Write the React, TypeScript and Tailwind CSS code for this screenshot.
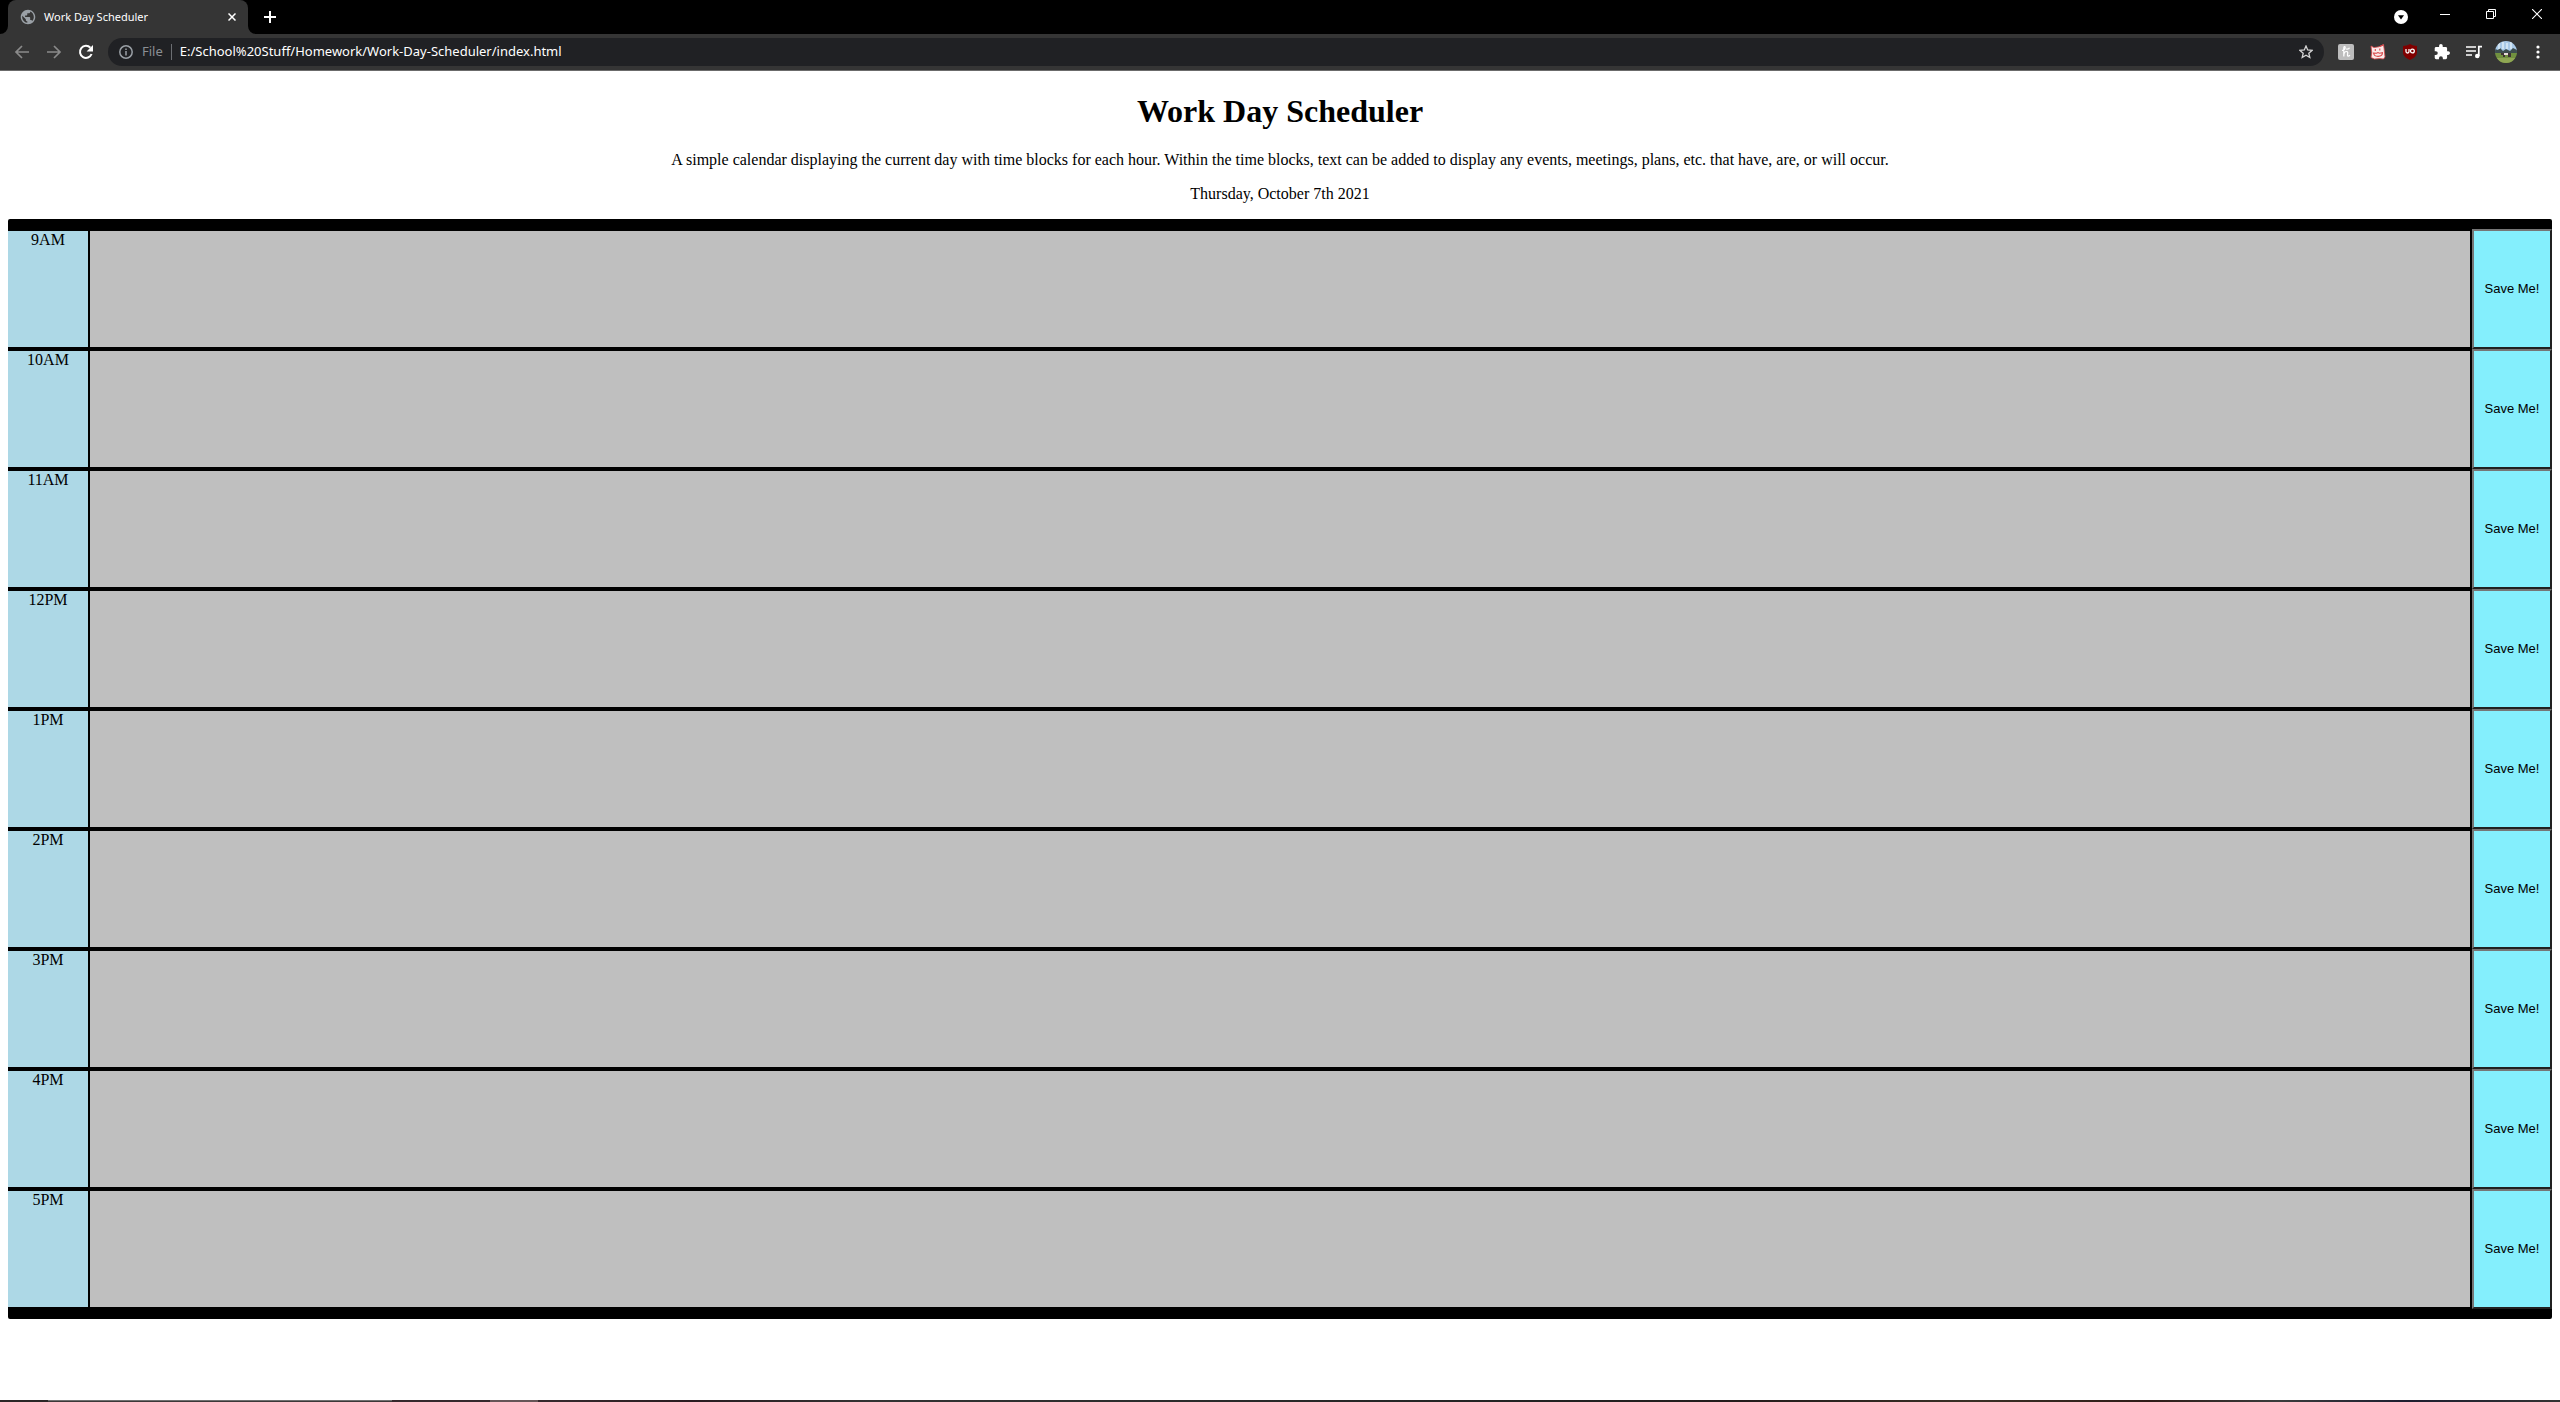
import React from 'react';

const hours = ['9AM', '10AM', '11AM', '12PM', '1PM', '2PM', '3PM', '4PM', '5PM'];

function Globe() {
  return (
    <svg viewBox="1 1 22 22" className="size-4 shrink-0">
      <path d="M12 2C6.48 2 2 6.48 2 12s4.48 10 10 10 10-4.48 10-10S17.52 2 12 2zm-1 17.93c-3.95-.49-7-3.85-7-7.93 0-.62.08-1.21.21-1.79L9 15v1c0 1.1.9 2 2 2v1.93zm6.9-2.54c-.26-.81-1-1.39-1.9-1.39h-1v-3c0-.55-.45-1-1-1H8v-2h2c.55 0 1-.45 1-1V7h2c1.1 0 2-.9 2-2v-.41c2.93 1.19 5 4.06 5 7.41 0 2.08-.8 3.97-2.1 5.39z" fill="#9aa0a6" />
    </svg>
  );
}

function TabStrip() {
  return (
    <div className="flex h-[34px] bg-black pl-2">
      <div className="relative flex w-60 items-center rounded-t-lg bg-[#353535] px-3 text-white">
        <svg viewBox="0 0 8 8" className="absolute bottom-0 -left-2 size-2"><path d="M8 0v8H0a8 8 0 0 0 8-8z" fill="#353535" /></svg>
        <svg viewBox="0 0 8 8" className="absolute -right-2 bottom-0 size-2"><path d="M0 0v8h8a8 8 0 0 1-8-8z" fill="#353535" /></svg>
        <Globe />
        <span className="ml-2 flex-1 font-['Noto_Sans','Open_Sans',sans-serif] text-[11px]">Work Day Scheduler</span>
        <button aria-label="Close tab">
          <svg viewBox="0 0 8 8" className="size-2"><path d="m.5.5 7 7m0-7-7 7" stroke="#fff" strokeWidth="1.5" /></svg>
        </button>
      </div>
      <button aria-label="New tab" className="ml-4">
        <svg viewBox="0 0 12 12" className="size-3"><path d="M6 0v12M0 6h12" stroke="#fff" strokeWidth="2" /></svg>
      </button>
      <div className="ml-auto flex">
        <button aria-label="Search tabs" className="mr-[14px]">
          <svg viewBox="0 0 14 14" className="size-[14px]"><circle cx="7" cy="7" r="7" fill="#fff" /><path d="M4 5.2h6L7 9.4z" fill="#000" /></svg>
        </button>
        <button aria-label="Minimize" className="flex h-7 w-[46px] items-center justify-center">
          <svg viewBox="0 0 10 10" className="size-[10px]"><path d="M0 5.5h10" stroke="#fff" /></svg>
        </button>
        <button aria-label="Restore" className="flex h-7 w-[46px] items-center justify-center">
          <svg viewBox="0 0 10 10" className="size-[10px]"><path d="M.5 2.5h7v7h-7zM2.5 2.5v-2h7v7h-2" fill="none" stroke="#fff" /></svg>
        </button>
        <button aria-label="Close" className="flex h-7 w-[46px] items-center justify-center">
          <svg viewBox="0 0 10 10" className="size-[10px]"><path d="m0 0 10 10M10 0 0 10" stroke="#fff" strokeWidth="1.1" /></svg>
        </button>
      </div>
    </div>
  );
}

function Toolbar() {
  return (
    <div className="flex h-[37px] items-center border-b border-[#6b6b6b] bg-[#353535] font-['Noto_Sans','Open_Sans',sans-serif]">
      <button aria-label="Back" className="ml-[14px]">
        <svg viewBox="0 0 16 16" className="size-4"><path d="M15 8H2m6-6L2 8l6 6" fill="none" stroke="#8a8a8a" strokeWidth="1.7" /></svg>
      </button>
      <button aria-label="Forward" className="ml-4">
        <svg viewBox="0 0 16 16" className="size-4"><path d="M1 8h13M8 2l6 6-6 6" fill="none" stroke="#8a8a8a" strokeWidth="1.7" /></svg>
      </button>
      <button aria-label="Reload" className="ml-4">
        <svg viewBox="0 0 16 16" className="size-4"><path d="M13.6 10A6 6 0 1 1 12.4 3.8" fill="none" stroke="#fff" strokeWidth="2" /><path d="M15 1v6.4H8.6z" fill="#fff" /></svg>
      </button>
      <div className="ml-[14px] flex h-7 flex-1 items-center rounded-full bg-[#202124] px-[11px]">
        <svg viewBox="0 0 14 14" className="size-[14px]"><circle cx="7" cy="7" r="6.2" fill="none" stroke="#9aa0a6" strokeWidth="1.5" /><path d="M7 6v4.5M7 3.4v1.5" stroke="#9aa0a6" strokeWidth="1.5" /></svg>
        <label htmlFor="url" className="ml-[9px] text-[13px] text-[#8b8f94]">File</label>
        <span className="mx-2 h-4 w-px bg-[#6b6e72]" />
        <input id="url" className="min-w-0 flex-1 bg-transparent text-[13px] text-white outline-none" defaultValue="E:/School%20Stuff/Homework/Work-Day-Scheduler/index.html" />
        <button aria-label="Bookmark this page">
          <svg viewBox="0 0 14 14" className="size-[14px]"><path d="m7 1 1.7 4 4.3.4-3.2 2.8 1 4.3L7 10.2l-3.8 2.3 1-4.3L1 5.4 5.3 5z" fill="none" stroke="#d5d5d5" strokeWidth="1.3" /></svg>
        </button>
      </div>
      <div className="ml-[14px] flex items-center gap-4 pr-5">
        <button aria-label="Honey">
          <svg viewBox="0 0 16 16" className="size-4"><rect width="16" height="16" rx="2" fill="#bdbdbd" /><path d="M4 6.5c2 0 3.3-1.5 3.2-3.2-.1-1.2-1.3-1-1.4.5v8.7c0-3 1.2-5 2.7-5s1.4 1.5 1 3.2c-.3 1.7.8 2 2.5.5M8 5c1.500.3 3 0 3.5-1.2" fill="none" stroke="#fff" strokeWidth="1.2" /></svg>
        </button>
        <button aria-label="Cat extension">
          <svg viewBox="0 0 16 16" className="size-4"><path d="m1 2 3 1.600 5-.8L13.500.5l.5 3.500 1 9-1.500 2-4-.5-5 .5L1 13.500 1.800 9z" fill="#faeaea" stroke="#d9484a" strokeWidth=".8" /><path d="M5.300 5v2M9.800 4.600v2M3.500 9l3 .3L8 8.500l1.500.7 3-.5c0 2.500-1.500 3.500-4.300 3.700-2.700.1-4.200-.9-4.700-3.400zM10 2.500l3.300-1.500" fill="none" stroke="#d9484a" strokeWidth="1.100" /></svg>
        </button>
        <button aria-label="uBlock Origin">
          <svg viewBox="0 0 16 16" className="size-4"><path d="M8 0c2 1.300 4.500 2 7 2v6c0 4-3 6.300-7 8-4-1.700-7-4-7-8V2c2.500 0 5-.7 7-2z" fill="#800000" /><path d="M4 5v2.500a1.500 1.500 0 0 0 3 0V5" fill="none" stroke="#fff" strokeWidth="1.3" /><circle cx="10.4" cy="7" r="1.9" fill="none" stroke="#fff" strokeWidth="1.3" /></svg>
        </button>
        <button aria-label="Extensions">
          <svg viewBox="1 1 22 22" className="size-4"><path d="M20.5 11H19V7a2 2 0 0 0-2-2h-4V3.500a2.500 2.500 0 0 0-5 0V5H4a2 2 0 0 0-2 2v3.800h1.500a2.700 2.700 0 0 1 0 5.400H2V20a2 2 0 0 0 2 2h3.800v-1.500a2.700 2.700 0 0 1 5.400 0V22H17a2 2 0 0 0 2-2v-4h1.500a2.500 2.500 0 0 0 0-5z" fill="#fff" /></svg>
        </button>
        <button aria-label="Media controls">
          <svg viewBox="0 0 16 14" className="h-[14px] w-4"><path d="M0 2h10M0 6h10M0 10h6" stroke="#fff" strokeWidth="1.6" /><path d="M12.8 11V1.7H16" fill="none" stroke="#fff" strokeWidth="1.7" /><circle cx="11.3" cy="11" r="2.3" fill="#fff" /></svg>
        </button>
        <button aria-label="Profile" className="-mx-[3px]">
          <svg viewBox="0 0 22 22" className="size-[22px]">
            <clipPath id="face"><circle cx="11" cy="11" r="11" /></clipPath>
            <g clipPath="url(#face)">
              <path d="M0 0h22v12H0z" fill="#a9c9e8" />
              <path d="M0 8l3 1 2-2 3 3 3-2 4 2 3-3 4 2v4H0z" fill="#3d4d4e" />
              <path d="M4 2v6M8 1v7M12 2v6M16 1v7" stroke="#dcebf7" strokeWidth="1.5" />
              <path d="M0 12h22v10H0z" fill="#71913f" />
              <path d="M0 17h22v5H0z" fill="#8fa653" />
              <path d="M6 12h10v2H6zM8 14h2v2H8zM13 14h3v2h-3z" fill="#3f3434" />
              <path d="M9 12h4v2H9z" fill="#e6dada" />
            </g>
          </svg>
        </button>
        <button aria-label="Menu" className="ml-[6px]">
          <svg viewBox="0 0 4 14" className="h-[14px] w-1"><circle cx="2" cy="2" r="1.6" fill="#fff" /><circle cx="2" cy="7" r="1.6" fill="#fff" /><circle cx="2" cy="12" r="1.6" fill="#fff" /></svg>
        </button>
      </div>
    </div>
  );
}

export default function App() {
  return (
    <div className="flex min-h-screen flex-col bg-white font-['Liberation_Serif',serif] text-black">
      <TabStrip />
      <Toolbar />
      <main className="flex-1 px-2">
        <header className="pt-5 text-center">
          <h1 className="text-[32px] leading-[40px] font-bold">Work Day Scheduler</h1>
          <p className="mt-5 text-base leading-[18px]">A simple calendar displaying the current day with time blocks for each hour. Within the time blocks, text can be added to display any events, meetings, plans, etc. that have, are, or will occur.</p>
          <p className="mt-4 text-base leading-[18px]">Thursday, October 7th 2021</p>
        </header>
        <section className="mt-4 rounded-[2px] border-y-10 border-black bg-black">
          {hours.map((h) => (
            <div key={h} className="flex h-[120px]">
              <label htmlFor={h} className="w-20 border-y-2 border-black bg-[#add8e6] text-center text-base leading-[18px]">{h}</label>
              <textarea id={h} className="flex-1 resize-none border-2 border-black bg-[#bfbfbf] p-[2px] outline-none" />
              <button className="w-20 border-2 border-t-[#767676] border-r-[#212121] border-b-[#212121] border-l-[#767676] bg-[#84effd] font-['Liberation_Sans',Arial,sans-serif] text-[13px]">Save Me!</button>
            </div>
          ))}
        </section>
      </main>
      <footer className="flex h-[2px] bg-[linear-gradient(to_right,#35282c_22%,#2a1c20_27%,#333333_34%,#222222_60%,#241c1c_68%,#3a2f25_77%,#301c18_84%,#3a3c3c_89%,#1e1e30_94%,#333333)]">
        <div className="w-12 bg-[#2b2626]" />
        <div className="w-[344px] border-t border-[#707070] bg-[#3c3838]" />
        <div className="ml-[98px] w-12 bg-[#655557]" />
      </footer>
    </div>
  );
}
